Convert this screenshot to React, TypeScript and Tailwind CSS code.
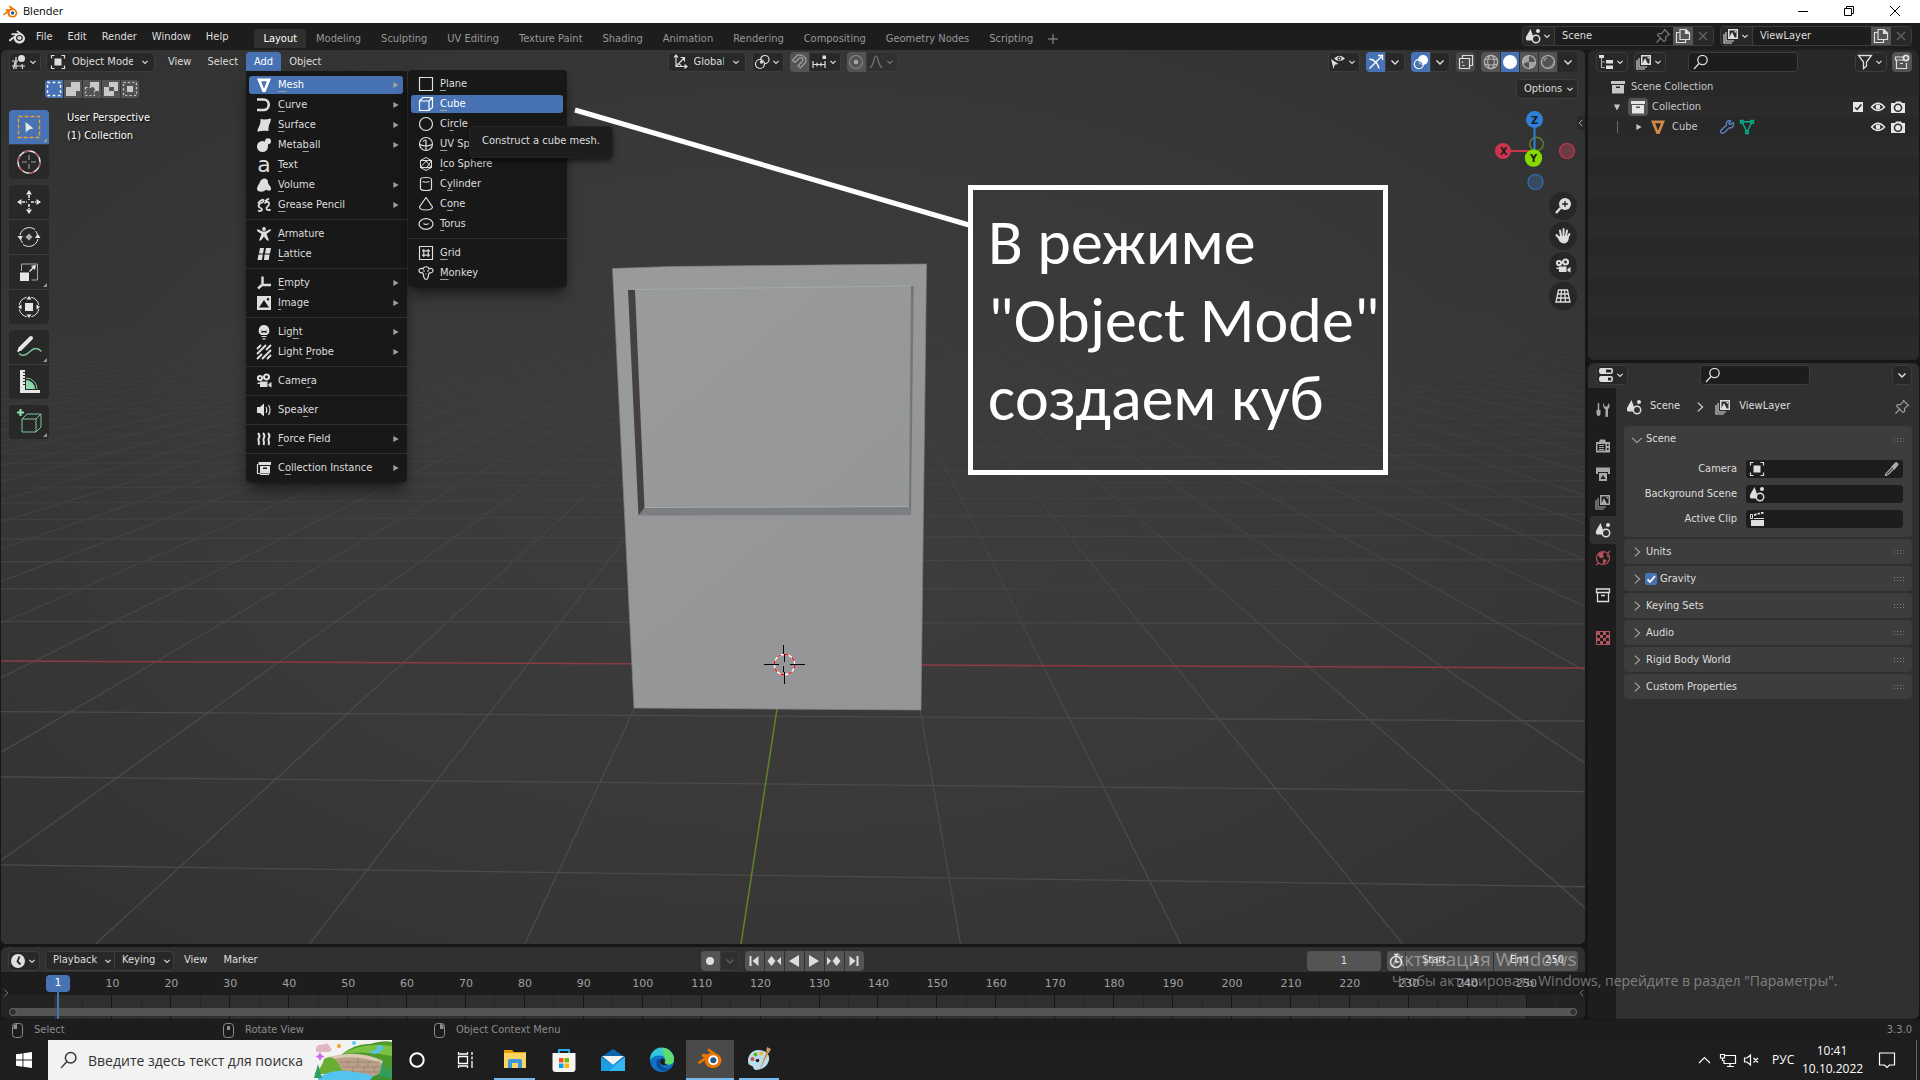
import React from 'react';
import { SiBlender } from 'react-icons/si';

const F = { fill: 'currentColor', stroke: 'none' };

// 16x16 glyphs, stroked unless spread with F
const icons: Record<string, React.ReactNode> = {
  chevron: <path d="M4.5 6.5 8 10l3.5-3.5" strokeWidth="1.5" />,
  right: <path d="M5.5 3 11 8l-5.5 5" />,
  down: <path d="M2.500 5.500 8 11l5.500-5.500" />,
  left: <path d="M10 3 5 8l5 5" />,
  triRight: <path {...F} d="M5 4.500v7l6-3.500z" />,
  triDown: <path {...F} d="M4.500 5h7L8 12z" />,
  mesh: <path {...F} fillRule="evenodd" d="M1 1.500h14L9.500 15h-3zM5.200 4.200h5.600L8.300 11h-.6z" />,
  curve: <path d="M1 2.500h6.500a5 5 0 0 1 0 10.500H4M1 13h7" strokeWidth="2.600" />,
  surface: <path {...F} d="M4.500 2Q9 3 14.800 1.500c.6 4-2.800 5-2.300 12.500Q7 13 1.500 14.800C1 11 5 9 4.500 2z" />,
  metaball: (
    <g {...F}>
      <circle cx="6.500" cy="9.500" r="5.500" />
      <circle cx="12" cy="4.200" r="3" />
      <path d="M7 4.500 10 7l3-1-4 6z" />
    </g>
  ),
  volume: <path {...F} d="M1 12c0-3 2-4.500 3-7 1-3 4.500-4.500 7-2.500 1.500 1.500.5 2.500 1.500 4.500S15.500 10 15 12.500c-1 2-4 1-5 0-2 3-9 3-9-.5z" />,
  grease: <path d="M2 6.500C4 3 8 1.500 7.500 4c0 2-4.500 1.500-5 4.500 0 3 3.500 2 3.500 4 0 1.500-2 2-4 1M8.500 6.500c2-2.500 5-2.500 4.500 1-.5 2-3.500 3-2.500 4.500.8 1.200 3 1.500 4 .5M9 4l4-2.500" strokeWidth="1.800" />,
  armature: (
    <g {...F}>
      <circle cx="8" cy="3" r="1.900" />
      <path d="m1.500 3 5 2.500h3l5-2.500.5 1.500L10.500 8l2.500 6.500h-2L8 10.500 5 14.500H3L5.500 8 1 5z" />
    </g>
  ),
  lattice: <path {...F} d="M4 2h4L7 7.500H3zM10 2h5l-1 5.500H9zM2.500 8.500h4.300L6 14H1.500zM8.500 8.500h5L12.800 14H8z" />,
  empty: <path d="M6.500 1.500v8M7 10h8M6.500 9.500l-4.500 4" strokeWidth="2.400" />,
  image: <path {...F} fillRule="evenodd" d="M1 1h14v14H1zm2 11.500h10L8 5zM12 3a1.300 1.300 0 1 0 0 2.600A1.300 1.300 0 0 0 12 3z" />,
  light: (
    <g>
      <path {...F} fillRule="evenodd" d="M8 1a5.500 5.500 0 0 0-3 10h6A5.500 5.500 0 0 0 8 1zM5.500 6l1.200 1h2.600l1.200-1v3H9.200V8.300H6.800V9H5.500z" />
      <path d="M5.500 12.500h5M6.500 14.800h3" />
    </g>
  ),
  probe: <path d="m1 5 4-4M1 10l9-9M1 15 6 10M10 6l5-5M6 15l9-9M11 15l4-4" strokeWidth="1.900" />,
  camera: (
    <g>
      <circle cx="4" cy="5" r="2.100" strokeWidth="2" />
      <circle cx="10.500" cy="4" r="2.500" strokeWidth="2.200" />
      <path {...F} d="M4 8.500h7.500V14H4zM12.500 11 15.500 9v5.500L12.500 13zM1.500 9.500H4V11H1.500z" />
    </g>
  ),
  speaker: (
    <g>
      <path {...F} d="M1 5h3l4-3.500v13L4 11H1z" />
      <path d="M10 5q1.500 3 0 6M12.500 3q3 5 0 10" />
    </g>
  ),
  force: <path d="M2 2c3 3 1 4 .5 6s1.500 3 0 6M7 2c3 3 1 4 .5 6s1.500 3 0 6M12 2c3 3 1 4 .5 6s1.500 3 0 6" strokeWidth="2" />,
  instance: (
    <g>
      <path {...F} fillRule="evenodd" d="M2.500 2H15v3H2.500zM4 6h10v7.500H4zm3 1.500V9h4V7.500z" />
      <path d="M1.500 4v9.500H4M4 14.500h9" />
    </g>
  ),
  plane: <path d="M1.500 1.500h13v13h-13z" />,
  cube: <path d="M1.500 5 5 1.500h9.500v10L11 14.500H1.500V5H11v9.500M11 5l3.500-3.500" />,
  circle: <circle cx="8" cy="8" r="6.500" />,
  uv: (
    <g>
      <circle cx="8" cy="8" r="6.500" />
      <path d="M8 4v7.500M2 8.500q6 3 12 0M8 4q-2 0-3 1.500M8 11.500q0 2 0 3" />
    </g>
  ),
  ico: <path d="m8 1.500 5.500 3v7L8 14.500l-5.500-3v-7zM2.500 4.500h11M13.500 4.500 8 12.500M2.500 11.500 8 5l5.500 6.500z" strokeWidth="1" />,
  cylinder: <path d="M2.500 3.500q0-2 5.500-2t5.500 2v9q0 2-5.500 2t-5.500-2zM4.500 5.500q3.500 1.500 7 0" />,
  cone: <path d="M8 1.500 14.500 11q-.5 3-6.500 3t-6.500-3z" />,
  torus: (
    <g>
      <ellipse cx="8" cy="8" rx="7" ry="5.300" />
      <path d="M5.500 7.500q2.500 2 5 0" />
    </g>
  ),
  grid: <path d="M1.500 1.500h13v13h-13zM5.800 4v8M10.200 4v8M4 5.800h8M4 10.200h8" />,
  monkey: <path d="M5 4c-2-1.500-4.500 0-4 2s2 2 3.500 1.800C6 9 5 10 6 12.500c.5 2.500 3.500 2.500 4 0 1-2.500 0-3.500 1.500-4.700C13 8 14.600 8 15 6s-2-3.500-4-2c-.5-3-5.500-3-6 0zM5 6h2M9 6h2M7.500 9h1" />,
  mode: (
    <g>
      <path {...F} d="M4.500 4.500h7v7h-7z" />
      <path d="M1.500 4.500v-3h3M11.500 1.500h3v3M14.500 11.500v3h-3M4.500 14.500h-3v-3" />
    </g>
  ),
  editor3d: (
    <g>
      <path d="M5 3v12M1 7h6M1 12h13M2.500 15l1.500-7M11.500 15 11 10" />
      <circle {...F} cx="10.500" cy="4.500" r="3.500" />
    </g>
  ),
  orient: <path d="M4 1v11.500h11M2 3.500 4 1l2 2.500M12.500 10.500l2.500 2-2.500 2M4 12.500 12 4M8.500 3.500H12.500V7.500M5.500 9.500a5 5 0 0 1 4 3" />,
  pivot: (
    <g>
      <circle cx="6" cy="10" r="4.500" />
      <path d="M6.500 5.500C7 2.500 9 1.500 11 1.500a4 4 0 0 1 0 8" />
      <circle {...F} cx="7.500" cy="8" r="1.700" />
    </g>
  ),
  magnet: <path d="m1.500 6.500 4-4.500C9-1 17 3 14.500 8.500L9.500 14 7 12l4.500-5C13 4 9.500 2.500 8 4.500l-4 4z" />,
  snap: (
    <g>
      <path d="M2 7v7M2 10.500h12M6 8.500v4M10 8.500v4M14 7v7" />
      <path {...F} d="M11.500 1.500H15V5h-3.500z" />
    </g>
  ),
  proportional: (
    <g>
      <circle cx="8" cy="8" r="6.500" opacity=".6" />
      <circle {...F} cx="8" cy="8" r="2.200" />
    </g>
  ),
  falloff: <path d="M1.500 13.500C6 13.500 5.500 2 8 2s2 11.500 6.500 11.500" />,
  visibility: (
    <g>
      <path {...F} fillRule="evenodd" d="M4 4.500q5.500-5.500 11 0-5.500 5-11 0zM9.500 2.500a2 2 0 1 0 0 4 2 2 0 0 0 0-4z" />
      <circle {...F} cx="9.500" cy="4.500" r="1" />
      <path {...F} d="m1 5 7.500 5-3.700.7L3.500 15z" />
    </g>
  ),
  gizmo: <path d="M1.500 14.500 14 2M10 1.500h4.500V6M1.500 5A11 11 0 0 1 11 14.500" strokeWidth="1.400" />,
  overlays: (
    <g>
      <circle cx="5.800" cy="10.200" r="4.500" />
      <circle {...F} cx="10" cy="6" r="5" />
      <path d="M5.500 7.500q2.500.5 3.500 3" stroke="#4772b3" />
    </g>
  ),
  xray: <path d="M1.500 4.500h10v10h-10zM4.500 4V1.500h10v10H12M4.500 7.500V9M4.500 11.500h2M8.500 11.500h0" />,
  wire: (
    <g>
      <circle cx="8" cy="8" r="6.700" />
      <ellipse cx="8" cy="8" rx="3.300" ry="6.700" />
      <path d="M1.500 6q6.500-2 13 0M1.500 10q6.500 2 13 0" />
    </g>
  ),
  solid: <circle {...F} cx="8" cy="8" r="7" />,
  material: (
    <g>
      <circle cx="8" cy="8" r="6.500" />
      <path {...F} d="M8 1.500A6.500 6.500 0 0 0 2 10q3-2 6-2zM8 8h6.500A6.500 6.500 0 0 1 8 14.500z" opacity=".8" />
    </g>
  ),
  rendered: (
    <g>
      <circle cx="8" cy="8" r="6.500" />
      <path {...F} d="M13 4a7 7 0 0 1-9 9q3.500 2 7-.5A6.500 6.500 0 0 0 13 4z" />
      <path d="M4 7q.5-2.500 3-3" />
    </g>
  ),
  scene: (
    <g>
      <path {...F} d="M5.500 1 8 8l-1 4.500H2Q0 11.500 1.500 8z" />
      <circle {...F} cx="13" cy="3" r="2" />
      <circle cx="11" cy="11" r="3.700" strokeWidth="1.500" />
    </g>
  ),
  layers: (
    <g>
      <path {...F} fillRule="evenodd" d="M5 1h10v10H5zm1.500 1.500v7h7v-7z" />
      <path {...F} d="m6 10 3-6 3 6zM11.500 3H13v1.500h-1.500z" />
      <path d="M3 4v9h8M1 6v9h8" strokeWidth="1.100" />
    </g>
  ),
  pin: <path d="m9.500 1.500 5 5-1.500.5-2.500 2.500.2 3L9 13.500 2.500 7l1-1.500 3 .2L9 3zM5.500 10.500l-4 4" />,
  newdoc: (
    <g>
      <path d="M5 1.500h6L14.500 5v6.500H5zM10.500 1.500V5.500H14.500" />
      <path {...F} d="M10.500 1.500 14.500 5.500h-4z" />
      <path d="M4.500 4.500h-3v10h9v-2.500" />
    </g>
  ),
  close: <path d="m4 4 8 8M12 4l-8 8" />,
  search: (
    <g>
      <circle cx="9.500" cy="6" r="4.700" strokeWidth="1.300" />
      <path d="m6 9.500-5 5.500" strokeWidth="1.300" />
    </g>
  ),
  outliner: (
    <g>
      <path {...F} d="M1 1h5v3H1zM8 6h7v3.500H8zM8 11.500h7V15H8z" />
      <path d="M3.500 4v9.500H7M3.500 8H7" opacity=".7" />
    </g>
  ),
  filter: <path d="M1.500 1.500h13L9.500 8v4L6.500 14.500V8z" strokeWidth="1.300" />,
  newcoll: (
    <g>
      <path d="M9 3H1.500v3H11M2.500 6v8.500h10V9M6 9.500h3" />
      <circle {...F} cx="12" cy="4" r="3.500" />
      <path d="M12 2v4M10 4h4" stroke="#545454" />
    </g>
  ),
  collection: <path {...F} fillRule="evenodd" d="M1 2h14v3H1zM2 6h12v8.500H2zm4 1.500V9h4V7.500z" />,
  collectionLine: <path d="M1.500 2h13v3.500h-13zM2.500 5.500v9h11v-9M6 8.500h4" strokeWidth="1.300" />,
  eye: (
    <g>
      <path d="M1.500 8Q8 .5 14.500 8 8 15 1.500 8z" strokeWidth="1.400" />
      <circle {...F} cx="8" cy="8" r="2.400" />
    </g>
  ),
  photo: (
    <g>
      <path {...F} fillRule="evenodd" d="M1 4h4l1-1.500h5L12 4h3v10H1zm7 .5a4.300 4.300 0 1 0 0 8.600 4.300 4.300 0 0 0 0-8.600z" />
      <circle {...F} cx="8" cy="8.800" r="2.800" />
    </g>
  ),
  wrench: <path d="M13.500 4 11 5.500 9.800 4.500 11.500 2C9 1 6.500 3 7.500 6L1.800 11.500c-.8 2 1.200 3.500 3 2.500L10 9c3 .5 5-2 4.500-5z" strokeWidth="1.400" />,
  meshdata: <path d="M1.500 1.500H4V4H1.500zM12 1.500h2.500V4H12zM6.800 12h2.500v2.500H6.800zM4 2.800h8M3.500 4l4 8M12.500 4l-4 8" strokeWidth="1.400" />,
  properties: (
    <g>
      <path {...F} fillRule="evenodd" d="M3 1h10q2 0 2 3t-2 3H3Q1 7 1 4t2-3zm5 1.500v3h4.500q1 0 1-1.500t-1-1.500zM3 9h10q2 0 2 3t-2 3H3q-2 0-2-3t2-3zm7 1.500v3h2.500q1 0 1-1.500t-1-1.500z" />
    </g>
  ),
  tool: (
    <g>
      <path d="M3.500 1v7" strokeWidth="1.500" />
      <path {...F} d="M1.500 8h4v4q-2 4.500-4 0zM8.500 1l1.200 3.500h2.600L13.500 1Q16 4 13 7.500v7q-1.500 1-2.500 0v-7Q7 5 8.500 1z" />
    </g>
  ),
  render: (
    <g>
      <path {...F} fillRule="evenodd" d="M1 4h3l1-2.500h5L11 4h4v10.500H1zm1.500 2v6.500h8V6zM12 6v2h1.500V6zm0 4v2h1.500v-2z" />
      <path d="M4 7.500h5M4 9.500h5M4 11.500h5" strokeWidth="1" />
    </g>
  ),
  output: <path {...F} fillRule="evenodd" d="M1 1.500h14V8h-2V6H3v2H1zM4 7h8v8H4zm1.500 6h5L8 9z" />,
  world: (
    <g>
      <circle cx="8" cy="8" r="6.500" />
      <path {...F} d="M3 4q2-2.500 6-2l-1 3 1 2-3 1.500L4 7zM8 9l4 1-3 4H8zM11 4l3 2-1 2z" />
      <path d="m1 15 3-2M12.500 3.500 15 1" />
    </g>
  ),
  texture: (
    <g>
      <path d="M1.500 1.500h13v13h-13z" />
      <path {...F} d="M2 2h3v3H2zM8 2h3v3H8zM5 5h3v3H5zM11 5h3v3h-3zM2 8h3v3H2zM8 8h3v3H8zM5 11h3v3H5zM11 11h3v3h-3z" />
    </g>
  ),
  dropper: (
    <g>
      <path {...F} d="m8 5 3-3.500Q14.500.5 14.500 4L11 8l-.5 1L7 5.500z" />
      <path d="m8 6.500-6 6-.5 2 2-.5 6-6" />
    </g>
  ),
  clip: (
    <g>
      <path {...F} d="M2 9h13v6H2zM5 3l2.500-.8v2L5 5zM8.500 2 11 1.500v1.800l-2.500.5zM12 1h2.500v1.800L12 3z" />
      <path d="M1.500 3.500h2v4h-2zM5 7.500h10" strokeWidth="1" />
    </g>
  ),
  clock: (
    <g>
      <circle {...F} cx="8" cy="8" r="7" />
      <path d="M9.500 3.500 7.500 8.500l3 3" stroke="#282828" strokeWidth="1.800" />
    </g>
  ),
  stopwatch: (
    <g>
      <circle cx="8" cy="9" r="5.500" strokeWidth="1.500" />
      <path d="M8 5.500V9h2.500M6 1.500h4M8 1.500v2M13 3l1.500 1.500" strokeWidth="1.500" />
    </g>
  ),
  record: <circle {...F} cx="8" cy="8" r="4" />,
  first: <path {...F} d="M3.500 3h2v10h-2zM12.500 3v10l-6-5z" />,
  prevKey: <path {...F} d="m5.500 3 4 5-4 5-4-5zM15 4v8l-4-4z" />,
  playBack: <path {...F} d="M13 2v12L3 8z" />,
  play: <path {...F} d="M3 2v12l10-6z" />,
  nextKey: <path {...F} d="m10.500 3 4 5-4 5-4-5zM1 4v8l4-4z" />,
  last: <path {...F} d="M10.500 3h2v10h-2zM3.500 3v10l6-5z" />,
  selNew: <path d="M1.500 1.500h13v13h-13z" strokeDasharray="2.600 2.600" strokeWidth="1.400" />,
  selAdd: <path {...F} d="M6 1h9v9h-4v5H1V6h5z" />,
  selSub: (
    <g>
      <path {...F} d="M6 1h9v9h-4V6H6z" />
      <path d="M1.500 6.500h9v8h-9z" strokeDasharray="2 2" />
    </g>
  ),
  selDiff: <path {...F} fillRule="evenodd" d="M6 1h9v9h-4v5H1V6h5zm0 5v4h5V6z" />,
  selInt: (
    <g>
      <path {...F} d="M5 5h6v6H5z" />
      <path d="M1.500 1.500h13v13h-13z" strokeDasharray="2.200 2.200" />
    </g>
  ),
};

const Icon = ({ name, size = 16, className = '' }: { name: string; size?: number; className?: string }) => (
  <svg viewBox="0 0 16 16" width={size} height={size} fill="none" stroke="currentColor" strokeWidth="1.200" className={`shrink-0 ${className}`} aria-hidden="true">
    {icons[name]}
  </svg>
);

const BlenderMark = ({ size }: { size: number }) => (
  <svg viewBox="0 0 24 20" width={size} height={size} aria-hidden="true">
    <path d="M1.500 14.500 14 5M5 7.500h11M11 2l8 6" stroke="#ea7600" strokeWidth="2.600" strokeLinecap="round" />
    <ellipse cx="15" cy="12.500" rx="8" ry="7" fill="#ea7600" />
    <circle cx="15.300" cy="12.300" r="4.800" fill="#fff" />
    <circle cx="15.300" cy="12.300" r="2.800" fill="#265787" />
  </svg>
);

interface ToolButtonProps {
  icon: string;
  label: string;
  arrow?: boolean;
  className?: string;
}

const dark = 'border border-[#3d3d3d] bg-[#282828] rounded';

const ToolButton: React.FC<ToolButtonProps> = ({ icon, label, arrow, className = `w-8 ${dark}` }) => (
  <button type="button" aria-label={label} className={`flex h-5 shrink-0 items-center justify-center ${className}`}>
    <Icon name={icon} />
    {arrow && <Icon name="chevron" size={12} />}
  </button>
);

const Dropdown = ({ label, icon, value, className }: { label: string; icon?: string; value: string; className: string }) => (
  <label className={`flex h-5 shrink-0 items-center ${dark} ${className}`}>
    {icon && <Icon name={icon} />}
    <select aria-label={label} className="min-w-0 flex-1 appearance-none bg-transparent px-1.5 outline-none">
      <option>{value}</option>
    </select>
    <Icon name="chevron" size={12} />
  </label>
);

interface MenuEntry {
  icon?: string;
  label: string;
  key: number;
  sub?: boolean;
  active?: boolean;
}

const addMenu: MenuEntry[][] = [
  [
    { icon: 'mesh', label: 'Mesh', key: 0, sub: true, active: true },
    { icon: 'curve', label: 'Curve', key: 0, sub: true },
    { icon: 'surface', label: 'Surface', key: 0, sub: true },
    { icon: 'metaball', label: 'Metaball', key: 4, sub: true },
    { label: 'Text', key: 0 },
    { icon: 'volume', label: 'Volume', key: 0, sub: true },
    { icon: 'grease', label: 'Grease Pencil', key: 0, sub: true },
  ],
  [
    { icon: 'armature', label: 'Armature', key: 0 },
    { icon: 'lattice', label: 'Lattice', key: 0 },
  ],
  [
    { icon: 'empty', label: 'Empty', key: 0, sub: true },
    { icon: 'image', label: 'Image', key: 0, sub: true },
  ],
  [
    { icon: 'light', label: 'Light', key: 3, sub: true },
    { icon: 'probe', label: 'Light Probe', key: 6, sub: true },
  ],
  [{ icon: 'camera', label: 'Camera', key: 4 }],
  [{ icon: 'speaker', label: 'Speaker', key: 4 }],
  [{ icon: 'force', label: 'Force Field', key: 0, sub: true }],
  [{ icon: 'instance', label: 'Collection Instance', key: 1, sub: true }],
];

const meshMenu: MenuEntry[][] = [
  [
    { icon: 'plane', label: 'Plane', key: 0 },
    { icon: 'cube', label: 'Cube', key: 0, active: true },
    { icon: 'circle', label: 'Circle', key: 2 },
    { icon: 'uv', label: 'UV Sphere', key: 0 },
    { icon: 'ico', label: 'Ico Sphere', key: 0 },
    { icon: 'cylinder', label: 'Cylinder', key: 1 },
    { icon: 'cone', label: 'Cone', key: 1 },
    { icon: 'torus', label: 'Torus', key: 0 },
  ],
  [
    { icon: 'grid', label: 'Grid', key: 0 },
    { icon: 'monkey', label: 'Monkey', key: 0 },
  ],
];

const Menu = ({ groups, className }: { groups: MenuEntry[][]; className: string }) => (
  <div role="menu" className={`bg-[#181818] py-1 shadow-lg shadow-black/50 ${className}`}>
    {groups.map((group, i) => (
      <div key={i} className={`flex flex-col gap-0.5 py-px ${i > 0 ? 'mt-1 border-t border-[#303030] pt-[5px]' : ''}`}>
        {group.map((item) => (
          <button
            key={item.label}
            type="button"
            role="menuitem"
            className={`mr-1 ml-[3px] flex h-[18px] items-center gap-1.5 rounded-[3px] pl-[7px] ${item.active ? 'bg-[#4772b3] text-white' : 'text-[#dedede]'}`}
          >
            {item.icon ? (
              <Icon name={item.icon} />
            ) : (
              <span className="w-4 text-center font-['DejaVu_Sans'] text-[22px] leading-4">a</span>
            )}
            <span className="flex-1 text-left">
              {item.label.slice(0, item.key)}
              <span className="underline decoration-[#a0a0a0] underline-offset-[3px]">{item.label[item.key]}</span>
              {item.label.slice(item.key + 1)}
            </span>
            {item.sub && <Icon name="triRight" size={14} className="text-[#a0a0a0]" />}
          </button>
        ))}
      </div>
    ))}
  </div>
);

// Perspective floor grid: rows step evenly in inverse distance to the horizon
const rows = Array.from({ length: 45 }, (_, i) => i - 4).filter((k) => k !== 0);
const columns = Array.from({ length: 71 }, (_, i) => i - 35).filter((k) => k !== 0);
const rowLeft = (k: number) => 272 + 1000 / (2.569 + 0.294 * k);
const rowRight = (k: number) => 249 + 1000 / (2.393 + 0.275 * k);

const Scene = () => (
  <svg viewBox="1 50 1584 894" preserveAspectRatio="xMidYMid slice" className="absolute inset-0 h-full w-full" aria-hidden="true">
    <defs>
      <radialGradient id="sky" cx=".5" cy=".5" r=".75">
        <stop offset="0" stopColor="#3d3d3d" />
        <stop offset=".5" stopColor="#393939" />
        <stop offset="1" stopColor="#303030" />
      </radialGradient>
      <linearGradient id="fog" x1="0" y1="50" x2="0" y2="944" gradientUnits="userSpaceOnUse">
        <stop offset=".25" stopColor="#000" />
        <stop offset=".6" stopColor="#aaa" />
        <stop offset=".75" stopColor="#fff" />
      </linearGradient>
      <linearGradient id="body" x1="0" y1="0" x2=".6" y2="1">
        <stop offset="0" stopColor="#9a9c9c" />
        <stop offset="1" stopColor="#939596" />
      </linearGradient>
      <mask id="fade" maskUnits="userSpaceOnUse" x="0" y="50" width="1590" height="900">
        <rect x="0" y="50" width="1590" height="900" fill="url(#fog)" />
      </mask>
    </defs>
    <rect x="1" y="50" width="1584" height="894" fill="url(#sky)" />
    <g mask="url(#fade)" stroke="#4b4b4b" strokeWidth="1.300">
      {columns.map((k) => {
        const slope = -0.148 + 0.3185 * k + 0.0012 * k * k;
        return <line key={k} x1={843 + slope * 20} y1="280" x2={843 + slope * 690} y2="950" />;
      })}
      {rows.map((k) => (
        <line key={k} x1="0" y1={rowLeft(k)} x2="1585" y2={rowRight(k)} opacity={k > 4 ? Math.max(0.2, 1 - k / 40) : 1} />
      ))}
    </g>
    <path d="M1 661 1585 668" stroke="#8c3a45" strokeWidth="1.500" />
    <path d="M777 709 741 944" stroke="#618424" strokeWidth="1.500" />
    <path d="m612.500 268.500 60-2 254-2.500L921 710l-287-2z" fill="url(#body)" stroke="#7f8181" strokeWidth=".7" />
    <path d="m628 290 7 0 9.500 218-6 7.500z" fill="#454142" />
    <path d="m638.500 515.500 6-7.500 264.500-1 2 8z" fill="#7d7e81" />
    <path d="m911 286 2.700 0-2.700 229-2-8z" fill="#737577" />
    <path d="m635 289.500 276-3.500M644.500 507.500l264.500-1" stroke="#a6a9a9" />
    <g fill="none">
      <circle cx="784.500" cy="664.500" r="10.200" stroke="#fff" strokeWidth="1.200" />
      <circle cx="784.500" cy="664.500" r="10.200" stroke="#f00" strokeWidth="1.200" strokeDasharray="4 4" />
      <path d="M764 664.500h15M790 664.500h15M783.500 645v9M784.500 654v8M783.500 666v6M784.500 672v12" stroke="#000" />
    </g>
  </svg>
);

const NavGizmo = () => (
  <svg viewBox="1493 108 84 84" width="84" height="84" role="img" aria-label="View axes" className="mt-[9px] mr-px text-[11px] font-bold">
    <circle cx="1536.500" cy="144" r="6.800" fill="none" stroke="#618424" strokeWidth="1.400" />
    <path d="M1534.500 120v34" stroke="#2f80d8" strokeWidth="2" />
    <path d="M1503 151h30" stroke="#cb344c" strokeWidth="2" />
    <circle cx="1503" cy="151" r="8" fill="#cb344c" />
    <circle cx="1567" cy="151" r="7.500" fill="#6e3b44" stroke="#cb344c" strokeWidth="1.200" />
    <circle cx="1535.500" cy="182" r="7.500" fill="#374a62" stroke="#2f74c0" strokeWidth="1.200" />
    <circle cx="1534.500" cy="119.500" r="8.500" fill="#2f80d8" />
    <circle cx="1533.500" cy="158" r="8.700" fill="#86d900" />
    <g fill="#1c1c1c" textAnchor="middle">
      <text x="1534.500" y="124">Z</text>
      <text x="1503.500" y="155">X</text>
      <text x="1533.500" y="162">Y</text>
    </g>
  </svg>
);

const toolGlyphs: Record<string, React.ReactNode> = {
  select: (
    <g>
      <path d="M1.500 1.500h21v21h-21z" stroke="#f0a030" strokeDasharray="4 2" strokeWidth="1.400" />
      <path {...F} d="m8.500 7 8 6.500-4 .7-3.700 3z" />
    </g>
  ),
  cursor: (
    <g>
      <circle cx="12" cy="12" r="11" strokeWidth="1.400" />
      <circle cx="12" cy="12" r="11" stroke="#b04a50" strokeDasharray="5.800 5.800" strokeWidth="1.400" />
      <path d="M12 5v5M12 14v5M5 12h5M14 12h5" stroke="#999" strokeWidth="1.200" />
    </g>
  ),
  move: (
    <g>
      <path d="M12 5v5M12 14v5M5 12h5M14 12h5" strokeWidth="1.600" strokeDasharray="3 1" />
      <path {...F} d="m12 0 3 4.500H9zM12 24l-3-4.500h6zM0 12l4.500-3v6zM24 12l-4.500 3V9z" />
    </g>
  ),
  rotate: (
    <g>
      <path d="M3 10a9.500 9.500 0 0 1 15-5.500M21 14a9.500 9.500 0 0 1-15 5.500M20.500 11q0-3-2-5M3.500 13q.5 3 2 5" />
      <path {...F} d="M.5 11H6l-2.700 4zM18 13h5.500l-2.700-4z" />
      <path {...F} d="m12 8.500 3.500 3.500-3.500 3.500L8.500 12z" opacity=".7" />
    </g>
  ),
  scale: (
    <g>
      <path d="M4.500 11V4h16v16h-6" stroke="#aaa" />
      <path {...F} d="M3 12.500h9V21H3z" />
      <path d="m12.500 11.500 4-4" strokeWidth="1.400" />
      <path {...F} d="m14 6 5-1-1 5z" />
    </g>
  ),
  transform: (
    <g>
      <circle cx="12" cy="12" r="10" strokeDasharray="11 4.700" strokeDashoffset="-2" />
      <path {...F} d="M8 8h8v8H8zM12 1l2.500 3.500h-5zM12 23l-2.500-3.500h5zM1 12l3.500-2.500v5zM23 12l-3.500 2.500v-5z" />
    </g>
  ),
  annotate: (
    <g>
      <path d="M3 14 14 3" strokeWidth="4" strokeLinecap="round" />
      <path d="M.5 16.500 4 14" strokeWidth="2" />
      <path d="M2 18.500c3 3 7 2 11-2s8-4 11.500 0" stroke="#7dc79a" strokeWidth="1.300" />
    </g>
  ),
  measure: (
    <g>
      <path {...F} d="M3 0h5v2H6v1h2v2H6v1h2v2H6v1h2v2H6v1h2v2H6v1h2v5h15v3H3z" />
      <path d="M9 10a9 9 0 0 1 9 9H9z" fill="#8fd8ae" stroke="none" />
      <path d="M9 8a11 11 0 0 1 11 11" stroke="#7dc79a" />
    </g>
  ),
  addcube: (
    <g stroke="#7dc79a">
      <path d="M5 9h14v13H5zM5 9l5-5h14v13l-5 5M19 9l5-5" />
      <path d="M3.500-1v7M0 2.500h7" strokeWidth="2.200" stroke="#8fe0b0" />
    </g>
  ),
};

const tools = [
  [['select', 'Select Box', true], ['cursor', 'Cursor', false]],
  [['move', 'Move', false], ['rotate', 'Rotate', false], ['scale', 'Scale', true], ['transform', 'Transform', false]],
  [['annotate', 'Annotate', true], ['measure', 'Measure', false]],
  [['addcube', 'Add Cube', true]],
] as [string, string, boolean][][];

const navGlyphs: [string, React.ReactNode][] = [
  ['Zoom', <g key="z"><circle {...F} cx="10" cy="6" r="6" /><path d="m5.500 10-4.500 5" strokeWidth="2.400" /><path d="M10 3v6M7 6h6" stroke="#282828" strokeWidth="1.400" /></g>],
  ['Move view', <path key="m" d="M4 10 1.500 7M6 8 5 2.500M8.500 8V1M11 8l1-5.500M12.500 9.500l2-3.500M5 9h8q-.5 5.500-4 5.500T4 10z" strokeWidth="2" fill="currentColor" strokeLinecap="round" />],
  ['Camera view', <g key="c">{icons.camera}</g>],
  ['Perspective', <path key="p" d="M3.500 2h9l2.500 12H1zM3 6h10M2 10h12M6.500 2 5.500 14M9.500 2l1 12" strokeWidth="1.300" />],
];

const ViewportHeader = () => (
  <div className="relative z-20 flex h-[26px] items-start pt-0.5 pr-2 pl-2">
    <ToolButton icon="editor3d" label="Editor type" arrow />
    <Dropdown label="Interaction mode" icon="mode" value="Object Mode" className="mx-[5px] w-[109px] px-[3px]" />
    <button type="button" className="h-5 px-2">View</button>
    <button type="button" className="h-5 px-2">Select</button>
    <div className="relative">
      <button type="button" className="h-5 rounded-t bg-[#4772b3] px-2 text-white">Add</button>
      <div className="absolute top-[18px] left-0 flex items-start">
        <Menu groups={addMenu} className="mt-px w-[161px] rounded-b" />
        <div className="relative ml-px">
          <Menu groups={meshMenu} className="w-[159px] rounded" />
          <div role="tooltip" className="absolute top-[56px] left-[61px] flex h-8 items-center rounded border border-[#242424] bg-[#1d1d1d] px-3 pb-0.5 whitespace-nowrap text-[#dedede] shadow-md shadow-black/50">
            Construct a cube mesh.
          </div>
        </div>
      </div>
    </div>
    <button type="button" className="h-5 px-2">Object</button>
    <div className="flex-[11]" />
    <div className="flex gap-1.5">
      <Dropdown label="Transform orientation" icon="orient" value="Global" className="w-[78px] px-[3px]" />
      <ToolButton icon="pivot" label="Pivot point" arrow />
      <div className="flex">
        <ToolButton icon="magnet" label="Snap" className="w-[19px] rounded-l bg-[#545454] text-[#a0a0a0]" />
        <ToolButton icon="snap" label="Snapping" arrow className="w-8 rounded-r border border-[#3d3d3d] bg-[#282828]" />
      </div>
      <div className="flex text-[#8f8f8f]">
        <ToolButton icon="proportional" label="Proportional editing" className="w-[19px] rounded-l bg-[#545454] text-[#a8a8a8]" />
        <ToolButton icon="falloff" label="Falloff" arrow className="w-8 rounded-r border border-[#3a3a3a] bg-[#303030] text-[#777]" />
      </div>
    </div>
    <div className="flex-[14]" />
    <div className="flex gap-[6px]">
      <ToolButton icon="visibility" label="Object types visibility" arrow />
      <div className="flex">
        <ToolButton icon="gizmo" label="Gizmos" className="w-[19px] rounded-l bg-[#4772b3] text-white" />
        <ToolButton icon="chevron" label="Gizmo options" className="w-5 rounded-r border border-[#3d3d3d] bg-[#282828]" />
      </div>
      <div className="flex">
        <ToolButton icon="overlays" label="Overlays" className="w-[19px] rounded-l bg-[#4772b3] text-white" />
        <ToolButton icon="chevron" label="Overlay options" className="w-5 rounded-r border border-[#3d3d3d] bg-[#282828]" />
      </div>
      <ToolButton icon="xray" label="X-Ray" className="w-[19px] rounded bg-[#484848]" />
      <div className="flex gap-px">
        <ToolButton icon="wire" label="Wireframe" className="w-[19px] rounded-l bg-[#545454] text-[#b5b5b5]" />
        <ToolButton icon="solid" label="Solid" className="w-[18px] bg-[#4772b3] text-white" />
        <ToolButton icon="material" label="Material preview" className="w-[18px] bg-[#545454] text-[#b5b5b5]" />
        <ToolButton icon="rendered" label="Rendered" className="w-[18px] bg-[#545454] text-[#b5b5b5]" />
        <ToolButton icon="chevron" label="Shading options" className="w-[19px] rounded-r bg-[#282828]" />
      </div>
    </div>
  </div>
);

const Viewport = () => (
  <section aria-label="3D Viewport" className="relative min-h-0 flex-1 overflow-hidden rounded-md bg-[#393939]">
    <Scene />
    <ViewportHeader />
    <div className="relative flex justify-between">
      <div>
        <div className="mt-1 ml-11 flex gap-px">
          {['selNew', 'selAdd', 'selSub', 'selDiff', 'selInt'].map((name, i) => (
            <button
              key={name}
              type="button"
              aria-label={`Selection mode ${i + 1}`}
              className={`flex h-[18px] w-[18px] items-center justify-center ${i === 0 ? 'rounded-l bg-[#4772b3] text-white' : 'bg-[#545454] text-[#c8c8c8] last:rounded-r'}`}
            >
              <Icon name={name} />
            </button>
          ))}
        </div>
        <div className="mt-3 ml-2 flex gap-[18px]">
          <div className="flex flex-col gap-1.5">
            {tools.map((group, i) => (
              <div key={i} className="flex flex-col gap-px overflow-hidden rounded bg-[#3d3d3d]">
                {group.map(([name, label, more]) => (
                  <button
                    key={name}
                    type="button"
                    aria-label={label}
                    className={`relative flex h-[34px] w-10 items-center justify-center text-[#e6e6e6] ${name === 'select' ? 'bg-[#4772b3]' : 'bg-[#282828]'}`}
                  >
                    <svg viewBox="0 0 24 24" width="24" height="24" fill="none" stroke="currentColor" className="overflow-visible">
                      {toolGlyphs[name]}
                    </svg>
                    {more && (
                      <svg viewBox="0 0 4 4" width="4" height="4" className="absolute right-[2px] bottom-[2px] text-[#999]">
                        <path {...F} d="M4 0v4H0z" />
                      </svg>
                    )}
                  </button>
                ))}
              </div>
            ))}
          </div>
          <div className="-mt-px leading-[18px] text-white [text-shadow:1px_1px_2px_#000]">
            <p>User Perspective</p>
            <p>(1) Collection</p>
          </div>
        </div>
      </div>
      <div className="flex flex-col items-end pt-[3px] pr-[7px]">
        <button type="button" className={`flex h-5 w-[62px] items-center justify-between pr-px pl-[7px] ${dark}`}>
          Options
          <Icon name="chevron" size={12} />
        </button>
        <NavGizmo />
        <div className="mr-px flex flex-col gap-0.5">
          {navGlyphs.map(([label, glyph]) => (
            <button key={label} type="button" aria-label={label} className="flex h-7 w-7 items-center justify-center rounded-full bg-[#272727]">
              <svg viewBox="0 0 16 16" width="16" height="16" fill="none" stroke="currentColor">
                {glyph}
              </svg>
            </button>
          ))}
        </div>
      </div>
    </div>
    <button type="button" aria-label="Show sidebar" className="absolute top-[66px] right-0 flex h-[14px] w-2 items-center justify-center rounded-l bg-[#282828]">
      <Icon name="left" size={10} />
    </button>
    <svg viewBox="0 0 400 122" width="400" height="122" className="absolute top-[56px] left-[570px]" aria-hidden="true">
      <path d="M4 4 398 119" stroke="#fff" strokeWidth="5" />
    </svg>
    <div className="absolute top-[135px] left-[967px] h-[290px] w-[420px] border-[5px] border-white pt-[13px] pl-[15px] font-['Carlito',sans-serif] text-[64px] leading-[78px] whitespace-nowrap text-white">
      <p>В режиме</p>
      <p>"Object Mode"</p>
      <p>создаем куб</p>
    </div>
  </section>
);

const transport = ['first', 'prevKey', 'playBack', 'play', 'nextKey', 'last'];
const frames = Array.from({ length: 25 }, (_, i) => (i + 1) * 10);

const Timeline = () => (
  <section aria-label="Timeline" className="relative overflow-hidden rounded-md bg-[#303030]">
    <div className="flex h-[25px] items-center pt-0.5 pr-[7px] pl-[7px]">
      <ToolButton icon="clock" label="Editor type" arrow />
      <div className={`ml-[5px] flex h-5 ${dark}`}>
        <button type="button" className="flex w-[69px] items-center justify-between border-r border-[#3d3d3d] pl-[7px]">
          Playback <Icon name="chevron" size={12} />
        </button>
        <button type="button" className="flex w-[58px] items-center justify-between pl-[7px]">
          Keying <Icon name="chevron" size={12} />
        </button>
      </div>
      <button type="button" className="h-5 pr-2 pl-2.5">View</button>
      <button type="button" className="h-5 px-2">Marker</button>
      <div className="flex flex-1 justify-center gap-[5px] pr-2">
        <div className="flex">
          <ToolButton icon="record" label="Auto keying" className="w-[19px] rounded-l bg-[#545454]" />
          <ToolButton icon="chevron" label="Auto keying options" className="w-5 rounded-r border border-[#3a3a3a] text-[#5c5c5c]" />
        </div>
        <div className="flex gap-px overflow-hidden rounded">
          {transport.map((name) => (
            <ToolButton key={name} icon={name} label={name} className="w-[19px] bg-[#545454]" />
          ))}
        </div>
      </div>
      <input aria-label="Current frame" defaultValue="1" className="h-5 w-[74px] rounded bg-[#545454] text-center" />
      <div className="ml-1.5 flex h-5 gap-px overflow-hidden rounded">
        <ToolButton icon="stopwatch" label="Use preview range" className="w-[18px] bg-[#545454]" />
        <label className="flex w-[87px] items-center bg-[#545454] pl-4">
          Start
          <input defaultValue="1" className="w-full min-w-0 bg-transparent pr-3.5 text-right" />
        </label>
        <label className="flex w-[84px] items-center bg-[#545454] pl-4">
          End
          <input defaultValue="250" className="w-full min-w-0 bg-transparent pr-3.5 text-right" />
        </label>
      </div>
    </div>
    <div className="flex h-[23px] items-center bg-[#1d1d1d] pt-0.5 pr-[29px] pl-[82px] font-['DejaVu_Sans',sans-serif] text-[#a0a0a0]">
      {frames.map((frame) => (
        <span key={frame} className="flex-1 text-center">{frame}</span>
      ))}
    </div>
    <div className="relative flex h-6 bg-[#232323]">
      <div className="w-[53px] border-r border-[#1c1c1c]" />
      <div className="w-[29px] border-r border-[#272727] bg-[#303030]" />
      {frames.map((frame) => (
        <div key={frame} className="flex flex-1">
          <div className="flex-1 border-r border-[#161616] bg-[#303030]" />
          <div className={`flex-1 border-r border-[#272727] ${frame < 250 ? 'bg-[#303030]' : ''}`} />
        </div>
      ))}
      <div className="w-[29px]" />
      <div className="absolute inset-x-2 bottom-[3px] flex h-2 items-center justify-between rounded-full bg-[#545454]">
        <span className="h-2 w-2 rounded-full border border-[#666] bg-[#303030]" />
        <span className="h-2 w-2 rounded-full border border-[#666] bg-[#303030]" />
      </div>
    </div>
    <div className="absolute top-[28px] left-[45px] flex h-11 w-6 flex-col items-center">
      <span className="flex h-[17px] w-6 items-center justify-center rounded bg-[#4772b3] font-['DejaVu_Sans',sans-serif] text-white">1</span>
      <span className="w-0.5 flex-1 bg-[#4772b3]" />
    </div>
    <button type="button" aria-label="Show channels" className="absolute top-[39px] left-0 flex h-[14px] w-2 items-center text-[#999]">
      <Icon name="right" size={10} />
    </button>
    <button type="button" aria-label="Show sidebar" className="absolute top-[39px] right-0 flex h-[14px] w-2 items-center text-[#999]">
      <Icon name="left" size={10} />
    </button>
  </section>
);

const SearchField = ({ label, className = '' }: { label: string; className?: string }) => (
  <label className={`flex h-5 w-[110px] items-center rounded border border-[#3d3d3d] bg-[#1d1d1d] pl-1 ${className}`}>
    <Icon name="search" />
    <input type="search" aria-label={label} className="w-full min-w-0 bg-transparent" />
  </label>
);

interface CheckBoxProps {
  label?: string;
  box: string;
  tick: string;
}

const CheckBox: React.FC<CheckBoxProps> = ({ label, box, tick }) => (
  <span className={`relative flex shrink-0 ${box}`}>
    <input type="checkbox" defaultChecked aria-label={label} className="h-full w-full appearance-none" />
    <svg viewBox="0 0 12 12" className={`pointer-events-none absolute inset-0 h-full w-full ${tick}`} fill="none" stroke="currentColor" strokeWidth="1.800">
      <path d="m2.500 6.500 2.500 2.500 5-6" />
    </svg>
  </span>
);

const Outliner = () => (
  <section aria-label="Outliner" className="flex h-[310px] flex-col overflow-hidden rounded-md bg-[#282828]">
    <div className="flex h-[26px] items-start justify-between pt-0.5 pr-[7px] pl-2">
      <div className="flex gap-1.5">
        <ToolButton icon="outliner" label="Editor type" arrow />
        <ToolButton icon="layers" label="Display mode" arrow />
      </div>
      <SearchField label="Filter outliner" />
      <div className="ml-9 flex gap-[5px]">
        <ToolButton icon="filter" label="Filter" arrow />
        <ToolButton icon="newcoll" label="New collection" className="w-5 rounded bg-[#545454]" />
      </div>
    </div>
    <div className="flex-1 bg-[repeating-linear-gradient(#282828_0_20px,#2b2b2b_20px_40px)] text-[#c6c6c6]">
      <div className="flex h-5 items-center pt-0.5 pl-[22px]">
        <Icon name="collection" className="mr-[5px]" />
        Scene Collection
      </div>
      <div className="flex h-5 items-center pt-0.5 pr-[13px] pl-[22px]">
        <Icon name="triDown" size={14} />
        <span className="mr-1 ml-1 flex h-[18px] w-5 items-center justify-center rounded bg-[#545454] text-[#e6e6e6]">
          <Icon name="collection" />
        </span>
        <span className="flex-1">Collection</span>
        <CheckBox label="Include collection" box="mr-[7px] h-[10px] w-[10px] bg-[#e6e6e6]" tick="text-[#222]" />
        <button type="button" aria-label="Hide collection" className="mr-1 flex text-[#e6e6e6]"><Icon name="eye" /></button>
        <button type="button" aria-label="Disable collection in renders" className="flex text-[#e6e6e6]"><Icon name="photo" /></button>
      </div>
      <div className="flex h-5 items-center pt-0.5 pr-[13px] pl-[29px]">
        <span className="mr-[14px] h-3 w-px bg-[#6a6a6a]" />
        <Icon name="triRight" size={14} />
        <Icon name="mesh" className="mx-1 text-[#d0874a]" />
        <span className="ml-0.5">Cube</span>
        <Icon name="wrench" className="ml-[21px] text-[#5d80c4]" />
        <Icon name="meshdata" className="ml-1 text-[#00b38b]" />
        <button type="button" aria-label="Hide Cube" className="mr-1 ml-auto flex text-[#e6e6e6]"><Icon name="eye" /></button>
        <button type="button" aria-label="Disable Cube in renders" className="flex text-[#e6e6e6]"><Icon name="photo" /></button>
      </div>
    </div>
  </section>
);

const Grip = () => (
  <svg viewBox="0 0 12 6" width="12" height="6" className="ml-auto text-[#808080]" aria-hidden="true">
    <path d="M0 1.500h12M0 4.500h12" stroke="currentColor" strokeDasharray="1 2" />
  </svg>
);

const sceneFields = [
  { label: 'Camera', icon: 'mode', picker: true },
  { label: 'Background Scene', icon: 'scene' },
  { label: 'Active Clip', icon: 'clip' },
];

const panels = ['Units', 'Gravity', 'Keying Sets', 'Audio', 'Rigid Body World', 'Custom Properties'];

const propertyTabs = [
  { icon: 'tool', label: 'Tool', className: 'mb-2 h-7' },
  { icon: 'render', label: 'Render', className: 'h-7' },
  { icon: 'output', label: 'Output', className: 'h-7' },
  { icon: 'layers', label: 'View Layer', className: 'h-7' },
  { icon: 'scene', label: 'Scene', className: 'h-7 rounded-l bg-[#303030] text-[#dedede]' },
  { icon: 'world', label: 'World', className: 'h-7 text-[#b3525c]' },
  { icon: 'collectionLine', label: 'Collection', className: 'mt-[9px] h-7 text-[#dedede]' },
  { icon: 'texture', label: 'Texture', className: 'mt-[15px] h-7 text-[#b3525c]' },
];

const Properties = () => (
  <section aria-label="Properties" className="flex min-h-0 flex-1 flex-col overflow-hidden rounded-md bg-[#303030]">
    <div className="flex h-[25px] items-start justify-between pt-0.5 pr-[7px] pl-2">
      <ToolButton icon="properties" label="Editor type" arrow />
      <SearchField label="Filter properties" className="mr-2.5" />
      <ToolButton icon="chevron" label="Options" className={`w-5 ${dark}`} />
    </div>
    <div className="flex flex-1">
      <nav className="flex w-7 flex-col bg-[#1d1d1d] pt-2 pl-0.5 text-[#a8a8a8]">
        {propertyTabs.map((tab) => (
          <button key={tab.label} type="button" aria-label={tab.label} className={`flex items-center justify-center ${tab.className}`}>
            <Icon name={tab.icon} />
          </button>
        ))}
      </nav>
      <div className="flex-1 pr-[7px] pl-2">
        <div className="flex h-[38px] items-center pb-px pl-0.5">
          <Icon name="scene" />
          <span className="ml-2">Scene</span>
          <Icon name="right" size={14} className="mr-2 ml-[13px]" />
          <Icon name="layers" />
          <span className="ml-2">ViewLayer</span>
          <Icon name="pin" className="mr-0.5 ml-auto text-[#999]" />
        </div>
        <div className="mb-0.5 rounded bg-[#3d3d3d] pb-[9px]">
          <div className="flex h-[25px] items-center pt-0.5 pr-1.5 pl-1.5">
            <Icon name="down" size={14} className="mr-0.5 text-[#aaa]" />
            Scene
            <Grip />
          </div>
          <div className="mt-[9px] flex flex-col gap-[7px] pr-[9px]">
            {sceneFields.map((field) => (
              <label key={field.label} className="flex h-[18px] items-center">
                <span className="w-[113px] text-right">{field.label}</span>
                <span className="ml-[9px] flex h-full flex-1 items-center rounded-[3px] bg-[#1d1d1d] px-[3px]">
                  <Icon name={field.icon} />
                  <input className="w-full min-w-0 bg-transparent" />
                  {field.picker && <Icon name="dropper" className="text-[#aaa]" />}
                </span>
              </label>
            ))}
          </div>
        </div>
        <div className="flex flex-col gap-0.5">
          {panels.map((panel) => (
            <div key={panel} className="flex h-[25px] items-center rounded bg-[#3d3d3d] pt-px pr-1.5 pl-1.5">
              <Icon name="right" size={14} className="mr-0.5 text-[#aaa]" />
              {panel === 'Gravity' ? (
                <label className="flex items-center gap-[3px]">
                  <CheckBox box="h-3 w-3 -ml-px rounded-[2px] bg-[#4772b3]" tick="text-white" />
                  Gravity
                </label>
              ) : (
                panel
              )}
              <Grip />
            </div>
          ))}
        </div>
      </div>
    </div>
  </section>
);

const workspaces = ['Modeling', 'Sculpting', 'UV Editing', 'Texture Paint', 'Shading', 'Animation', 'Rendering', 'Compositing', 'Geometry Nodes', 'Scripting'];

const DataBlock = ({ icon, name, pin }: { icon: string; name: string; pin?: boolean }) => (
  <div className="flex h-5 overflow-hidden rounded border border-[#3d3d3d]">
    <ToolButton icon={icon} label={`Browse ${name}`} arrow className="h-full w-[31px] bg-[#282828]" />
    <label className="flex w-[119px] items-center border-l border-[#3d3d3d] pl-[7px]">
      <input aria-label={`${name} name`} defaultValue={name} className="w-full min-w-0 bg-transparent" />
      {pin && <Icon name="pin" className="mr-0.5 text-[#777]" />}
    </label>
    <ToolButton icon="newdoc" label={`New ${name}`} className="h-full w-5 bg-[#545454]" />
    <ToolButton icon="close" label={`Remove ${name}`} className="h-full w-5 bg-[#282828] text-[#666]" />
  </div>
);

const TopBar = () => (
  <header className="flex h-[27px] items-start bg-[#1d1d1d] pr-2 pb-0.5">
    <nav className="flex h-[26px] items-center gap-[15px] pt-0.5 pl-[9px]">
      <SiBlender size={16} className="-mr-1 text-[#dedede]" />
      {['File', 'Edit', 'Render', 'Window', 'Help'].map((item) => (
        <button key={item} type="button">{item}</button>
      ))}
    </nav>
    <nav className="mt-1.5 ml-[26px] flex h-[19px] items-center text-[#989898]">
      <button type="button" className="h-full rounded-t bg-[#303030] px-[9px] pt-0.5 text-white">Layout</button>
      {workspaces.map((item) => (
        <button key={item} type="button" className="h-full px-2.5 pt-0.5">{item}</button>
      ))}
      <button type="button" aria-label="Add workspace" className="ml-[5px]">
        <svg viewBox="0 0 10 10" width="10" height="10" stroke="currentColor"><path d="M5 0v10M0 5h10" /></svg>
      </button>
    </nav>
    <div className="mt-[3px] ml-auto flex gap-1.5">
      <DataBlock icon="scene" name="Scene" pin />
      <DataBlock icon="layers" name="ViewLayer" />
    </div>
  </header>
);

const mouseHints = [
  { label: 'Select', d: 'M1.500 6V3.500Q1.500 1 5 1v5z' },
  { label: 'Rotate View', d: 'M4 3h3v4H4z' },
  { label: 'Object Context Menu', d: 'M6 1q3.500 0 3.500 2.500V6H6z' },
];

const StatusBar = () => (
  <footer className="flex h-5 items-center bg-[#1d1d1d] pt-px pr-2 pl-3 text-[#8c8c8c]">
    {mouseHints.map((hint) => (
      <div key={hint.label} className="flex w-[211px] items-center gap-[11px]">
        <svg viewBox="0 0 11 15" width="11" height="15" fill="none" stroke="currentColor" aria-hidden="true">
          <rect x=".5" y=".5" width="10" height="14" rx="3" />
          <path {...F} d={hint.d} />
        </svg>
        {hint.label}
      </div>
    ))}
    <span className="ml-auto">3.3.0</span>
  </footer>
);

const taskIcons: { label: string; className?: string; glyph: React.ReactNode }[] = [
  { label: 'Cortana', glyph: <circle cx="14" cy="14" r="6.700" fill="none" stroke="#fff" strokeWidth="2" /> },
  {
    label: 'Task view',
    glyph: <path d="M6.500 10.500h9v7h-9zM6.500 6v2h9V6M6.500 22v-2h9v2M20 6v3M20 10.500v3M20 15v7" fill="none" stroke="#fff" strokeWidth="1.300" />,
  },
  {
    label: 'File Explorer',
    className: 'mx-1 w-[41px] border-b-2 border-[#76b9ed]',
    glyph: (
      <g>
        <path d="M3 5h8l2 2h12v16H3z" fill="#e8a200" />
        <path d="M3 8h22v15H3z" fill="#fcd462" />
        <path d="M7 23v-7q0-2 2-2h10q2 0 2 2v7h-4v-5h-6v5z" fill="#3b97e0" />
      </g>
    ),
  },
  {
    label: 'Microsoft Store',
    glyph: (
      <g>
        <path d="M9 8V4h10v4" fill="none" stroke="#2aa7ea" strokeWidth="2" />
        <path d="M2.500 7h23v16q0 3-3 3h-17q-3 0-3-3z" fill="#f4f4f4" />
        <path d="M9 12h4.500v4.500H9z" fill="#f25022" />
        <path d="M14.500 12H19v4.500h-4.500z" fill="#7fba00" />
        <path d="M9 17.500h4.500V22H9z" fill="#00a4ef" />
        <path d="M14.500 17.500H19V22h-4.500z" fill="#ffb900" />
      </g>
    ),
  },
  {
    label: 'Mail',
    glyph: (
      <g>
        <path d="m2 11 12-8 12 8v14H2z" fill="#0a64ad" />
        <path d="M3 10h22l-11 9z" fill="#f2f2f2" />
        <path d="m2 11 12 8 12-8v14H2z" fill="#1b9de2" />
        <path d="m26 11-16 14h16z" fill="#35b8f1" />
      </g>
    ),
  },
  {
    label: 'Microsoft Edge',
    glyph: (
      <g>
        <circle cx="14" cy="14" r="12" fill="#1173c6" />
        <path d="M2 14A12 12 0 0 1 26 13q.3 5-5 5.500-4 0-4.500-2 1.500-1 1-3-1-4-6-4Q5 9.500 2 14z" fill="#36c5d8" />
        <path d="M14 2a12 12 0 0 1 12 11q.3 5-5 5.500-4 0-4.500-2 2-1.500.5-4z" fill="#5fdd6c" />
        <path d="M9.500 13q-3 6 2 10.500 6 3 11-1.500-7 1.500-10-3-1.500-3 0-6z" fill="#0b4a94" />
        <path d="M13 12.500q3.500-.5 4 2-.3 1-.5 2 .5 2 3 2-6 2-7.500-2z" fill="#1e1e1e" />
      </g>
    ),
  },
  {
    label: 'Blender',
    className: 'w-12 border-b-2 border-[#76b9ed] bg-[#4a4a4a]',
    glyph: (
      <g transform="translate(2 3)">
        <path d="M1.500 14.500 14 5M5 7.500h11M11 2l8 6" stroke="#ea7600" strokeWidth="2.800" strokeLinecap="round" />
        <ellipse cx="15" cy="12.500" rx="8.500" ry="7.500" fill="#ea7600" />
        <circle cx="15.300" cy="12.300" r="5" fill="#fff" />
        <circle cx="15.300" cy="12.300" r="3" fill="#265787" />
      </g>
    ),
  },
  {
    label: 'Paint',
    className: 'ml-[5px] w-10 border-b-2 border-[#76b9ed]',
    glyph: (
      <g>
        <path d="M13 5c8 0 12 4 11 10s-7 10-13 10c-3 0-2-3-4-4s-4-1-4-5C3 10 7 5 13 5z" fill="#b9dcef" />
        <circle cx="7.500" cy="14" r="2" fill="#e2483d" />
        <circle cx="10.500" cy="9.500" r="2" fill="#5cb531" />
        <circle cx="16" cy="8.500" r="2" fill="#f3b71b" />
        <circle cx="12.500" cy="15.500" r="1.800" fill="#1e1e1e" />
        <path d="m14 26 8-20 2 1z" fill="#e0822d" />
        <path d="m21 6 1-4 4 2-2 4z" fill="#c79a67" />
      </g>
    ),
  },
];

const SearchArt = () => (
  <svg viewBox="0 0 80 40" width="80" height="40" className="shrink-0" aria-hidden="true">
    <path d="M30 14Q44 3 58 4 72 0 80 2v38H20z" fill="#4f9a2a" />
    <path d="M30 14q20-12 50-8v10q-25-6-50-2z" fill="#7cc142" />
    <path d="M56 12q12-2 8-6l6-1q4 6-8 9z" fill="#58c4ee" />
    <path d="M14 19q30-10 56 4v14H24z" fill="#b9a08a" />
    <path d="M16 17q30-8 55 4v3q-26-11-55-4z" fill="#dcc9b4" />
    <path d="M28 22h40M31 27h37M34 32h34M36 20v5M46 18v8M56 21v6M41 27v5M52 27v5M62 27v5" stroke="#9a826c" strokeWidth=".8" />
    <path d="M12 19q8-5 14 4 4 8 8 11H2q8-6 10-15z" fill="#69ad35" />
    <path d="M6 38q14-10 36-6 20 2 22 8H6z" fill="#55c3f0" />
    <path d="M58 40q6-8 22-8v8z" fill="#3f8f2c" />
    <path d="m6 24 4 14H2zM71 20l5 16h-9zM78 26l4 12h-8z" fill="#2f9e62" />
    <path d="M4 10q0-6 6-5 6-4 8 2 4 4-2 5H6Q3 12 4 10z" fill="#e0b6c0" />
    <path d="m8 12 1.500 3 3 1.500-3 1.500L8 21l-1.500-3-3-1.500 3-1.500z" fill="#d066e8" />
    <circle cx="27" cy="6" r="2" fill="#f5a31a" />
    <circle cx="42" cy="3" r="2" fill="#5ccdf5" />
  </svg>
);

const Taskbar = () => (
  <footer className="flex h-10 items-stretch bg-[#1e1e1e] font-['Open_Sans',sans-serif] text-white">
    <button type="button" aria-label="Start" className="flex w-12 items-center justify-center">
      <svg viewBox="0 0 16 16" width="16" height="16" fill="#fff">
        <path d="M0 2.300 6.500 1.400v6.200H0zM7.400 1.200 16 0v7.500H7.400zM0 8.500h6.500v6.200L0 13.800zM7.400 8.500H16V16l-8.600-1.200z" />
      </svg>
    </button>
    <label className="flex w-[344px] items-center bg-[#f2f2f2] text-[#333]">
      <Icon name="search" size={18} className="ml-3" />
      <input type="text" aria-label="Поиск" placeholder="Введите здесь текст для поиска" className="ml-[10px] min-w-0 flex-1 bg-transparent text-[14px] placeholder:text-[#333]" />
      <SearchArt />
    </label>
    {taskIcons.map((item) => (
      <button key={item.label} type="button" aria-label={item.label} className={`flex items-center justify-center ${item.className || 'w-[49px]'}`}>
        <svg viewBox="0 0 28 28" width="28" height="28">{item.glyph}</svg>
      </button>
    ))}
    <div className="ml-auto flex items-center text-[12px] leading-[18px]">
      <svg viewBox="0 0 64 16" width="64" height="16" fill="none" stroke="#fff" strokeWidth="1.200" aria-hidden="true">
        <path d="m1 11 5.500-5.500L12 11" />
        <path d="M27 3.500h10.500v8H26V8M29 14.500h7M32 11.500v3M22.500 2.500h4v3.500h-4zM24.500 6v3" />
        <path d="M46.500 6h2.500l3.500-3v10L49 10h-2.500zM55.500 6l4.500 4.500M60 6l-4.500 4.500" />
      </svg>
      <span className="w-10 pl-2.5">РУС</span>
      <time className="w-[60px] text-center">
        10:41
        <br />
        10.10.2022
      </time>
      <button type="button" aria-label="Notifications" className="ml-4 flex">
        <svg viewBox="0 0 18 18" width="18" height="18" fill="none" stroke="#fff" strokeWidth="1.200">
          <path d="M1.500 2h15v12h-5L9 16.500 6.500 14h-5z" />
        </svg>
      </button>
      <span className="ml-5 h-10 border-l border-[#666] pl-[3px]" />
    </div>
  </footer>
);

const windowButtons = [
  { label: 'Minimize', d: 'M1 6.500h10' },
  { label: 'Restore', d: 'M1.500 3.500h7v7h-7zM3.500 3V1.500h7v7H9' },
  { label: 'Close', d: 'm1 1 10 10M11 1 1 11' },
];

const App: React.FC = () => (
  <div className="relative flex h-screen flex-col overflow-hidden bg-[#161616] font-['DejaVu_Sans_Condensed','DejaVu_Sans',sans-serif] text-[11px] text-[#dedede]">
    <div className="flex h-[23px] shrink-0 items-center bg-white pr-0.5 font-['Open_Sans',sans-serif] text-black">
      <span className="mr-[5px] ml-[3px]"><BlenderMark size={15} /></span>
      Blender
      <div className="ml-auto flex">
        {windowButtons.map((button) => (
          <button key={button.label} type="button" aria-label={button.label} className="flex w-[46px] justify-center pb-0.5">
            <svg viewBox="0 0 12 12" width="12" height="12" fill="none" stroke="#000">
              <path d={button.d} />
            </svg>
          </button>
        ))}
      </div>
    </div>
    <TopBar />
    <main className="flex min-h-0 flex-1 gap-[3px] px-px pb-px">
      <div className="flex min-w-0 flex-1 flex-col gap-[3px]">
        <Viewport />
        <Timeline />
      </div>
      <aside className="flex w-[331px] flex-col gap-[3px]">
        <Outliner />
        <Properties />
      </aside>
    </main>
    <StatusBar />
    <Taskbar />
    <div className="pointer-events-none absolute right-[73px] bottom-[89px] z-30 w-[455px] font-['Open_Sans',sans-serif] whitespace-nowrap text-white/40">
      <p className="text-[19px] leading-6">Активация Windows</p>
      <p className="text-[14px] leading-5">Чтобы активировать Windows, перейдите в раздел "Параметры".</p>
    </div>
  </div>
);

export default App;
